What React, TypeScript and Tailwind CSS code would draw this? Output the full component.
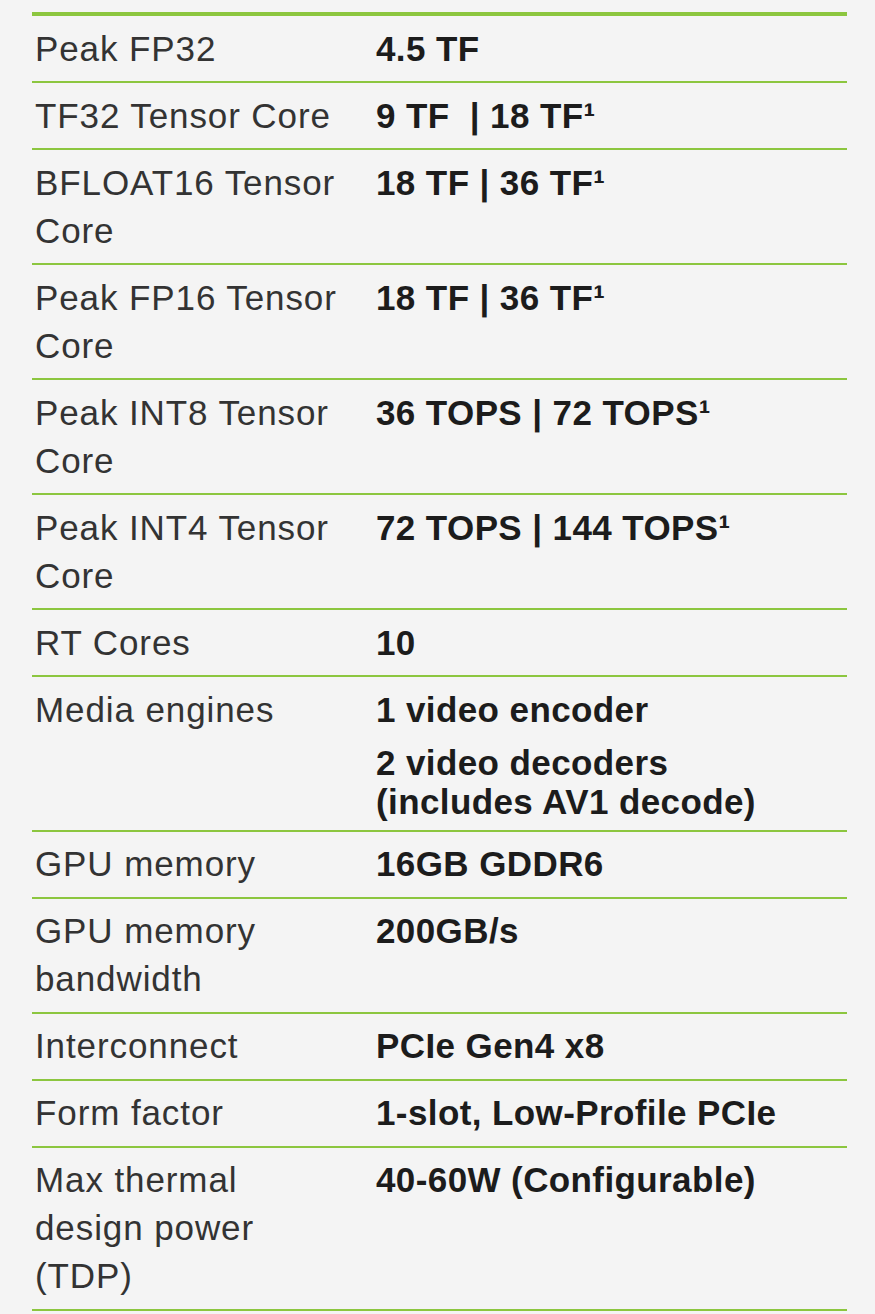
import React from "react";

type Row = { label: React.ReactNode; value: React.ReactNode };

const rows: Row[] = [
  { label: "Peak FP32", value: "4.5 TF" },
  { label: "TF32 Tensor Core", value: "9 TF  | 18 TF¹" },
  { label: <>BFLOAT16 Tensor<br />Core</>, value: "18 TF | 36 TF¹" },
  { label: <>Peak FP16 Tensor<br />Core</>, value: "18 TF | 36 TF¹" },
  { label: <>Peak INT8 Tensor<br />Core</>, value: "36 TOPS | 72 TOPS¹" },
  { label: <>Peak INT4 Tensor<br />Core</>, value: "72 TOPS | 144 TOPS¹" },
  { label: "RT Cores", value: "10" },
  {
    label: "Media engines",
    value: (
      <>
        <div>1 video encoder</div>
        <div className="mt-[9.5px] leading-[39px]">
          2 video decoders
          <br />
          (includes AV1 decode)
        </div>
      </>
    ),
  },
  { label: "GPU memory", value: "16GB GDDR6" },
  { label: <>GPU memory<br />bandwidth</>, value: "200GB/s" },
  { label: "Interconnect", value: "PCIe Gen4 x8" },
  { label: "Form factor", value: "1-slot, Low-Profile PCIe" },
  {
    label: <>Max thermal<br />design power<br />(TDP)</>,
    value: "40-60W (Configurable)",
  },
];

export default function App() {
  return (
    <div
      className="min-h-[1314px] w-[875px] bg-[#f4f4f4] pt-[12px] pl-[32px]"
      style={{ fontFamily: '"Liberation Sans", Arial, sans-serif' }}
    >
      <div className="w-[815px] border-t-[4px] border-[#8cc63f]">
        {rows.map((r, i) => (
          <div
            key={i}
            className="grid grid-cols-[344px_1fr] border-b-[2px] border-[#8cc63f] py-[8.5px]"
          >
            <div className="pl-[3px] text-[35px] leading-[48px] text-[#333333] whitespace-nowrap tracking-[0.9px]">
              {r.label}
            </div>
            <div className="text-[35px] leading-[48px] font-bold text-[#1c1c1c] whitespace-pre tracking-[0.4px]">
              {r.value}
            </div>
          </div>
        ))}
      </div>
    </div>
  );
}
